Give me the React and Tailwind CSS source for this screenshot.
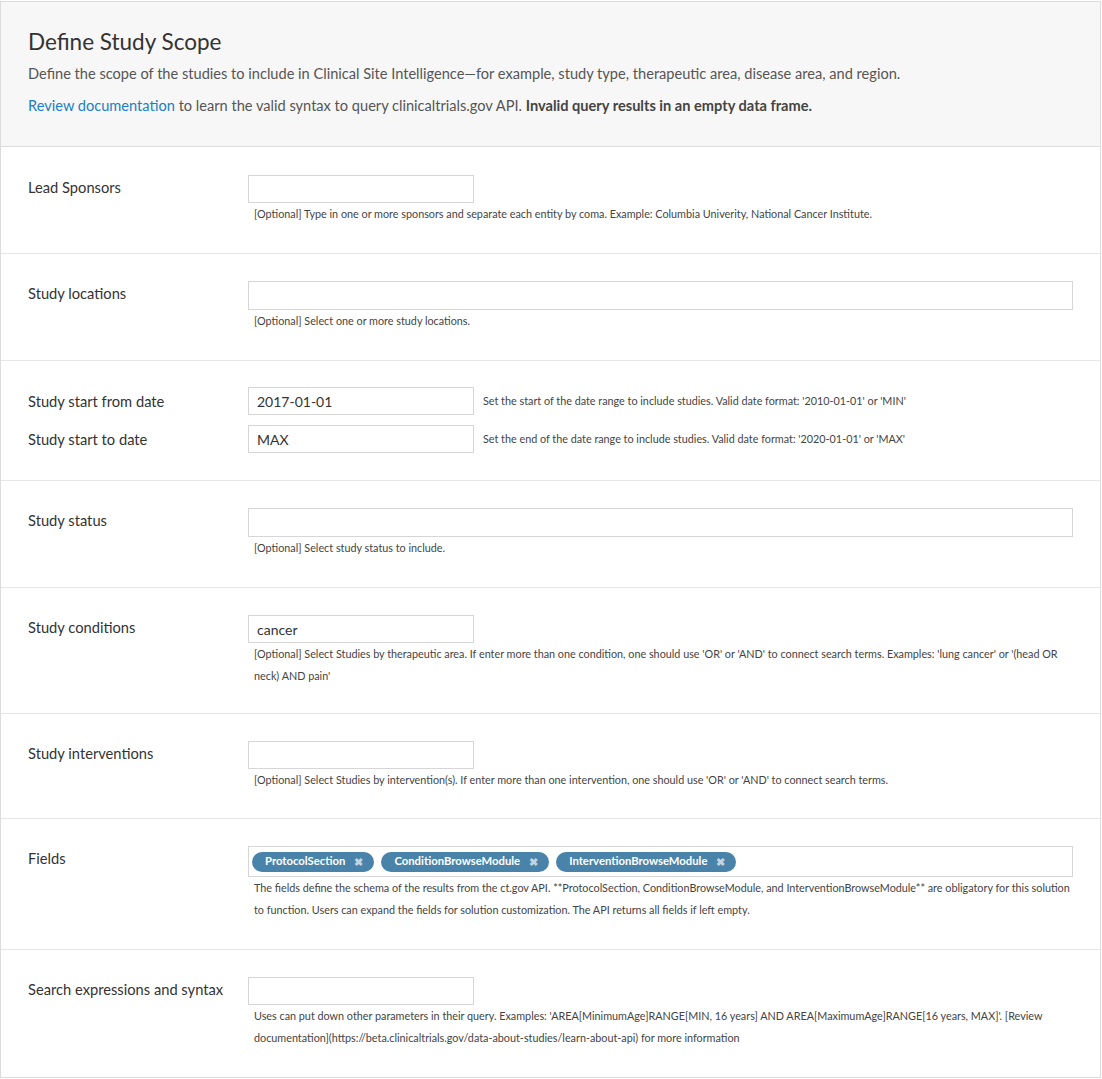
import { useState } from "react"

const font = { fontFamily: "Lato, 'Noto Sans', sans-serif" }

function TextInput({ value = "", wide = false }) {
  return (
    <input
      type="text"
      defaultValue={value}
      className={`block border border-[#d6d6d6] bg-white px-[8px] text-[14px] text-[#333] outline-none ${
        wide ? "h-[29px] w-full" : "h-[28px] w-[226px]"
      }`}
    />
  )
}

function Help({ children }) {
  return <p className="pl-[6px] text-[10.8px] leading-[22px] text-[#444]">{children}</p>
}

function Row({ label, children, className = "pt-[27px] pb-[28px]", last = false }) {
  return (
    <div className={`flex px-[27px] ${className} ${last ? "" : "border-b border-[#e6e6e6]"}`}>
      <div className="w-[220px] shrink-0 pt-[1px] text-[14.7px] leading-[22px] text-[#333]">{label}</div>
      <div className="min-w-0 flex-1">{children}</div>
    </div>
  )
}

function Tag({ name, onRemove }) {
  return (
    <span className="flex h-[20px] items-center gap-[9px] rounded-full bg-[#4a83aa] pl-[13px] pr-[11px] text-[11.3px] font-bold text-white">
      {name}
      <button onClick={onRemove} className="text-[11px] leading-none text-[#c3d3df]">
        ✖
      </button>
    </span>
  )
}

export default function App() {
  const [fields, setFields] = useState(["ProtocolSection", "ConditionBrowseModule", "InterventionBrowseModule"])

  return (
    <div style={font} className="bg-white pt-px">
      <div className="mr-px border border-[#dcdcdc]">
        {/* header */}
        <div className="border-b border-[#dcdcdc] bg-[#f7f7f7] px-[27px] pt-[24px] pb-[29px]">
          <h1 className="text-[22.5px] leading-[32px] text-[#333]">Define Study Scope</h1>
          <p className="mt-[5px] text-[14.6px] leading-[22px] text-[#555]">
            Define the scope of the studies to include in Clinical Site Intelligence—for example, study type,
            therapeutic area, disease area, and region.
          </p>
          <p className="mt-[10px] text-[14.6px] leading-[22px] text-[#555]">
            <a href="#" className="text-[#1a7fc3]">
              Review documentation
            </a>{" "}
            to learn the valid syntax to query clinicaltrials.gov API.{" "}
            <b className="font-bold text-[#444]">Invalid query results in an empty data frame.</b>
          </p>
        </div>

        <Row label="Lead Sponsors" className="pt-[28px] pb-[28px]">
          <TextInput />
          <Help>
            [Optional] Type in one or more sponsors and separate each entity by coma. Example: Columbia Univerity,
            National Cancer Institute.
          </Help>
        </Row>

        <Row label="Study locations">
          <TextInput wide />
          <Help>[Optional] Select one or more study locations.</Help>
        </Row>

        <div className="flex flex-col gap-[10px] border-b border-[#e6e6e6] px-[27px] pt-[26px] pb-[27px]">
          <div className="flex items-center">
            <div className="w-[220px] shrink-0 text-[14.7px] text-[#333]">Study start from date</div>
            <TextInput value="2017-01-01" />
            <span className="ml-[9px] text-[10.8px] text-[#444]">
              Set the start of the date range to include studies. Valid date format: '2010-01-01' or 'MIN'
            </span>
          </div>
          <div className="flex items-center">
            <div className="w-[220px] shrink-0 text-[14.7px] text-[#333]">Study start to date</div>
            <TextInput value="MAX" />
            <span className="ml-[9px] text-[10.8px] text-[#444]">
              Set the end of the date range to include studies. Valid date format: '2020-01-01' or 'MAX'
            </span>
          </div>
        </div>

        <Row label="Study status">
          <TextInput wide />
          <Help>[Optional] Select study status to include.</Help>
        </Row>

        <Row label="Study conditions" className="pt-[27px] pb-[26px]">
          <TextInput value="cancer" />
          <Help>
            [Optional] Select Studies by therapeutic area. If enter more than one condition, one should use 'OR' or
            'AND' to connect search terms. Examples: 'lung cancer' or '(head OR neck) AND pain'
          </Help>
        </Row>

        <Row label="Study interventions" className="pt-[27px] pb-[27px]">
          <TextInput />
          <Help>
            [Optional] Select Studies by intervention(s). If enter more than one intervention, one should use 'OR' or
            'AND' to connect search terms.
          </Help>
        </Row>

        <Row label="Fields">
          <div className="flex h-[31px] w-full items-center gap-[7px] border border-[#d6d6d6] px-[3px]">
            {fields.map((f) => (
              <Tag key={f} name={f} onRemove={() => setFields(fields.filter((x) => x !== f))} />
            ))}
          </div>
          <Help>
            The fields define the schema of the results from the ct.gov API. **ProtocolSection, ConditionBrowseModule,
            and InterventionBrowseModule** are obligatory for this solution to function. Users can expand the fields
            for solution customization. The API returns all fields if left empty.
          </Help>
        </Row>

        <Row label="Search expressions and syntax" last>
          <TextInput />
          <Help>
            Uses can put down other parameters in their query. Examples: 'AREA[MinimumAge]RANGE[MIN, 16 years] AND
            AREA[MaximumAge]RANGE[16 years, MAX]'. [Review
            documentation](https://beta.clinicaltrials.gov/data-about-studies/learn-about-api) for more information
          </Help>
        </Row>
      </div>
    </div>
  )
}
